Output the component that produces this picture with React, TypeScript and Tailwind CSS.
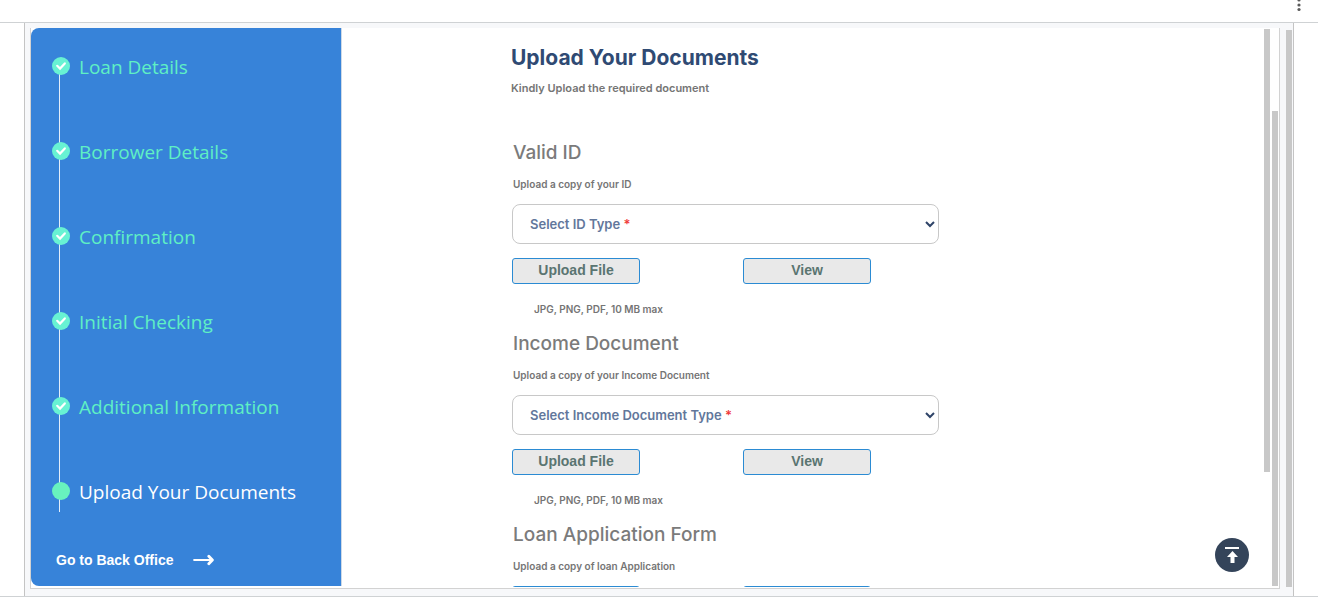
import { useState } from "react";

const steps = [
  { label: "Loan Details", done: true },
  { label: "Borrower Details", done: true },
  { label: "Confirmation", done: true },
  { label: "Initial Checking", done: true },
  { label: "Additional Information", done: true },
  { label: "Upload Your Documents", done: false },
];

function StepDot({ done }: { done: boolean }) {
  return (
    <svg viewBox="0 0 18 18" className="relative size-[18px] shrink-0" aria-hidden="true">
      <circle cx="9" cy="9" r="9" fill={done ? "#68f2d3" : "#68f2be"} />
      {done && (
        <path d="M5.2 8.8 8 11.6 12.8 6.4" fill="none" stroke="#fff" strokeWidth="2.2" strokeLinecap="round" />
      )}
    </svg>
  );
}

function Sidebar() {
  return (
    <aside className="mb-[2px] flex w-[311px] shrink-0 flex-col rounded-l-[8px] border-r border-[#cdd9e6] bg-[#3783d9] pt-[22px] font-['Open_Sans',sans-serif]">
      <ol className="relative ml-[21px] flex flex-col">
        <li aria-hidden="true" className="absolute top-[16px] bottom-[48px] left-[7px] w-px bg-[#e4eefa]" />
        {steps.map((step) => (
          <li key={step.label} className="flex h-[85px] items-start">
            <div className="flex items-center gap-[9px]">
              <StepDot done={step.done} />
              <span className={step.done ? "pt-[2px] text-[19px] leading-[30px] text-[#5ff0c4]" : "pt-[2px] text-[19px] leading-[30px] text-white"}>
                {step.label}
              </span>
            </div>
          </li>
        ))}
      </ol>
      <a
        href="#back-office"
        className="-mt-[10px] ml-[25px] flex items-center gap-5 font-['Liberation_Sans',sans-serif] text-[14px] leading-[20px] font-bold text-white"
      >
        Go to Back Office
        <svg viewBox="0 0 21 12" className="h-[12px] w-[21px]" fill="none" stroke="currentColor" strokeWidth="2.2" strokeLinecap="round" strokeLinejoin="round" aria-hidden="true">
          <path d="M1.2 6H19" />
          <path d="M15.8 2.2 19.4 6 15.8 9.8" strokeWidth="2.8" />
        </svg>
      </a>
    </aside>
  );
}

const buttonClass =
  "h-[26px] w-[128px] rounded-[3px] border border-[#2b8bd3] bg-[#e9e9e9] pb-[2px] font-['Liberation_Sans',sans-serif] text-[14px] leading-[20px] font-bold text-[#5a7571]";

function SectionTitle({ title, note }: { title: string; note: string }) {
  return (
    <>
      <h2 className="text-[19px] leading-[26px] font-medium text-[#7b7b7b]">{title}</h2>
      <p className="mt-[10px] text-[10px] leading-[16px] font-semibold text-[#757575]">{note}</p>
    </>
  );
}

function UploadSection({ id, title, note, placeholder, options }: {
  id: string;
  title: string;
  note: string;
  placeholder: string;
  options: string[];
}) {
  const [value, setValue] = useState("");
  return (
    <section className="mb-[14px]">
      <SectionTitle title={title} note={note} />
      <div className="relative mt-[12px] -ml-px max-w-[427px]">
        <select
          id={id}
          value={value}
          onChange={(e) => setValue(e.target.value)}
          className="block h-[40px] w-full rounded-[8px] border border-[#c8c8c8] bg-white pl-[14px] text-[13px] font-semibold text-[#2f4468]"
        >
          <option value="" />
          {options.map((o) => (
            <option key={o}>{o}</option>
          ))}
        </select>
        <label
          htmlFor={id}
          className={value ? "sr-only" : "pointer-events-none absolute inset-y-0 left-[18px] pt-px text-[13px] leading-[38px] font-semibold text-[#62779b]"}
        >
          {placeholder} <span className="text-[#f03a3a]">*</span>
        </label>
      </div>
      <div className="mt-[14px] -ml-px flex gap-[103px]">
        <button type="button" className={buttonClass}>Upload File</button>
        <button type="button" className={buttonClass}>View</button>
      </div>
      <p className="mt-[17px] ml-[21px] text-[10px] leading-[16px] font-semibold text-[#757575]">JPG, PNG, PDF, 10 MB max</p>
    </section>
  );
}

function UploadForm() {
  return (
    <main className="mb-px min-w-0 flex-1 overflow-hidden pt-[16px] pl-[169px] font-[Inter,sans-serif]">
      <h1 className="text-[21px] leading-[28px] font-bold text-[#2f4a73]">Upload Your Documents</h1>
      <p className="mt-[8px] text-[11px] leading-[16px] font-semibold text-[#757575]">Kindly Upload the required document</p>
      <div className="mt-[44px] ml-[2px]">
        <UploadSection
          id="id-type"
          title="Valid ID"
          note="Upload a copy of your ID"
          placeholder="Select ID Type"
          options={["Passport", "Driver's License"]}
        />
        <UploadSection
          id="income-type"
          title="Income Document"
          note="Upload a copy of your Income Document"
          placeholder="Select Income Document Type"
          options={["Payslip", "Tax Return"]}
        />
        <section>
          <SectionTitle title="Loan Application Form" note="Upload a copy of loan Application" />
          <div className="mt-[12px] -ml-px flex gap-[103px]">
            <button type="button" aria-label="Upload File" className={buttonClass} />
            <button type="button" aria-label="View" className={buttonClass} />
          </div>
        </section>
      </div>
    </main>
  );
}

export default function App() {
  return (
    <div className="flex h-screen flex-col overflow-hidden bg-white pb-[12px]">
      <header className="flex h-[23px] shrink-0 justify-end border-b border-[#cfd2d4] pr-[17px]">
        <button type="button" aria-label="More options" className="h-[12px] w-[4px]">
          <svg viewBox="0 0 4 12" className="h-[12px] w-[4px]" fill="#5b5b5b" aria-hidden="true">
            <circle cx="2" cy="0" r="1.6" />
            <circle cx="2" cy="5" r="1.6" />
            <circle cx="2" cy="9.5" r="1.6" />
          </svg>
        </button>
      </header>
      <div className="min-h-0 flex-1 border-b border-[#cfd2d4] px-[24px]">
        <div className="flex h-full border-x border-[#c4c4c4] bg-[#f7f8fa] pt-[5px] pb-[7px] pl-[5px]">
          <div className="relative flex min-w-0 flex-1 border-x border-b border-[#d2d2d2] bg-white">
            <Sidebar />
            <UploadForm />
            <div className="mt-px mr-[2px] h-[443px] w-[6px] shrink-0 bg-[#c8c8c8]" />
            <div className="mt-[83px] mr-px mb-[2px] w-[6px] shrink-0 bg-[#c8c8c8]" />
            <button
              type="button"
              aria-label="Back to top"
              className="absolute right-[30px] bottom-[16px] size-[34px] rounded-full bg-[#34445a]"
            >
              <svg viewBox="0 0 34 34" className="size-[34px]" fill="#fff" aria-hidden="true">
                <path d="M10 9h14v2H10zM17.5 13l5.5 6h-3.5v6h-4v-6H12z" />
              </svg>
            </button>
          </div>
          <div className="mt-[2px] mr-px mb-[2px] ml-[6px] w-[6px] shrink-0 bg-[#c8c8c8]" />
        </div>
      </div>
    </div>
  );
}
